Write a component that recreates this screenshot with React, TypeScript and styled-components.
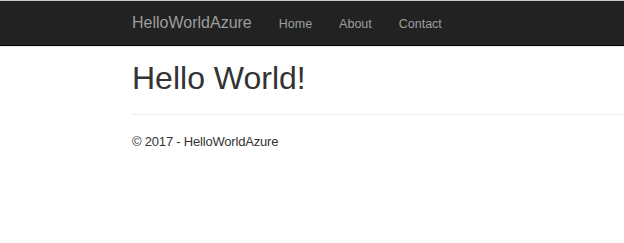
import React from "react";
import styled, { createGlobalStyle } from "styled-components";

const GlobalStyle = createGlobalStyle`
  html, body {
    margin: 0;
    padding: 0;
    background: #fff;
  }
  body {
    font-family: "Liberation Sans", Arial, sans-serif;
    color: #333;
  }
`;

type NavItem = {
  label: string;
  href: string;
};

const links: NavItem[] = [
  { label: "Home", href: "#" },
  { label: "About", href: "#" },
  { label: "Contact", href: "#" },
];

const App = () => {
  return (
    <>
      <GlobalStyle />
      <Navbar>
        <NavContainer>
          <Brand href="#">HelloWorldAzure</Brand>
          <NavList>
            {links.map((item, i) => (
              <NavLink href={item.href} key={i}>
                {item.label}
              </NavLink>
            ))}
          </NavList>
        </NavContainer>
      </Navbar>
      <BodyContent>
        <Title>Hello World!</Title>
        <Divider />
        <Footer>
          <p>&copy; 2017 - HelloWorldAzure</p>
        </Footer>
      </BodyContent>
    </>
  );
};

const Navbar = styled.nav`
  background-color: #222;
  border-top: 1px solid #c9c9c9;
  border-bottom: 1px solid #080808;
  box-shadow: 0 1px 0 #e6e6e6;
  margin-bottom: 1px;
`;

const NavContainer = styled.div`
  display: flex;
  align-items: stretch;
  height: 44px;
  padding-left: 132px;
`;

const Brand = styled.a`
  font-size: 16px;
  line-height: 44px;
  color: #9d9d9d;
  text-decoration: none;
  padding-right: 13.5px;
`;

const NavList = styled.div`
  display: flex;
`;

const NavLink = styled.a`
  font-size: 12.5px;
  line-height: 42px;
  padding: 2px 13.5px 0;
  color: #9d9d9d;
  text-decoration: none;
`;

const BodyContent = styled.div`
  padding-left: 132px;
`;

const Title = styled.h1`
  margin: 15px 0 0;
  font-size: 32px;
  line-height: 35px;
  font-weight: 400;
  color: #333;
`;

const Divider = styled.hr`
  margin: 18px 0 0;
  border: 0;
  border-top: 1px solid #eee;
`;

const Footer = styled.footer`
  p {
    margin: 18px 0 0;
    font-size: 13px;
    line-height: 18px;
    letter-spacing: -0.2px;
  }
`;

export default App;
